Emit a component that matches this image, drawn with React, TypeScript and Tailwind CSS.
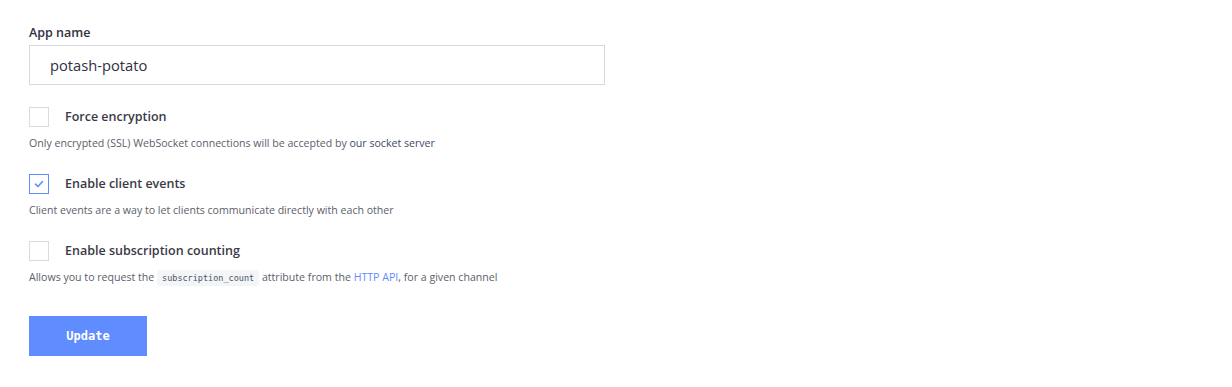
import { useState } from "react";

function Checkbox({ checked, onChange }: { checked: boolean; onChange: () => void }) {
  return (
    <button
      type="button"
      onClick={onChange}
      className={`flex h-5 w-5 items-center justify-center border bg-white ${
        checked ? "border-[#5f8cff]" : "border-[#d5dce6]"
      }`}
    >
      {checked && (
        <svg width="10" height="8" viewBox="0 0 10 8" fill="none">
          <path d="M1.5 4.2 L4 6.5 L8.5 1.5" stroke="#5f8cff" strokeWidth="1.6" strokeLinecap="round" strokeLinejoin="round" />
        </svg>
      )}
    </button>
  );
}

function Option({
  title,
  checked,
  onChange,
  first,
  children,
}: {
  title: string;
  checked: boolean;
  onChange: () => void;
  first?: boolean;
  children: React.ReactNode;
}) {
  return (
    <div className={first ? "mt-[22px]" : "mt-[24px]"}>
      <div className="flex items-center gap-4">
        <Checkbox checked={checked} onChange={onChange} />
        <span className="pt-px text-[12.5px] font-semibold text-[#3a3a46]">{title}</span>
      </div>
      <p className="mt-[9px] text-[10.6px] leading-[14px] text-[#5b606b]">{children}</p>
    </div>
  );
}

export default function App() {
  const [name, setName] = useState("potash-potato");
  const [force, setForce] = useState(false);
  const [client, setClient] = useState(true);
  const [counting, setCounting] = useState(false);

  return (
    <div className="min-h-screen bg-white px-[29px] pt-[25px] font-['Open_Sans',sans-serif]">
      <label className="block text-[12.5px] font-semibold leading-[16px] text-[#2f3140]">App name</label>
      <input
        value={name}
        onChange={(e) => setName(e.target.value)}
        className="mt-[4px] h-10 w-[576px] border border-[#d2d9e4] px-[20px] text-[14.7px] text-[#2f3140] outline-none"
      />

      <Option first title="Force encryption" checked={force} onChange={() => setForce(!force)}>
        Only encrypted (SSL) WebSocket connections will be accepted by{" "}
        <a className="text-[#3d4a66]">our socket server</a>
      </Option>

      <Option title="Enable client events" checked={client} onChange={() => setClient(!client)}>
        Client events are a way to let clients communicate directly with each other
      </Option>

      <Option title="Enable subscription counting" checked={counting} onChange={() => setCounting(!counting)}>
        Allows you to request the{" "}
        <code className="rounded bg-[#f3f6f9] px-[5px] py-[3px] font-['DejaVu_Sans_Mono',monospace] text-[8.5px] text-[#4e5460]">
          subscription_count
        </code>{" "}
        attribute from the <a className="text-[#5f8cff]">HTTP API</a>, for a given channel
      </Option>

      <button
        type="button"
        className="mt-[31px] h-10 w-[118px] bg-[#5f8cff] font-['DejaVu_Sans_Mono',monospace] text-[12px] font-bold text-white"
      >
        Update
      </button>
    </div>
  );
}
